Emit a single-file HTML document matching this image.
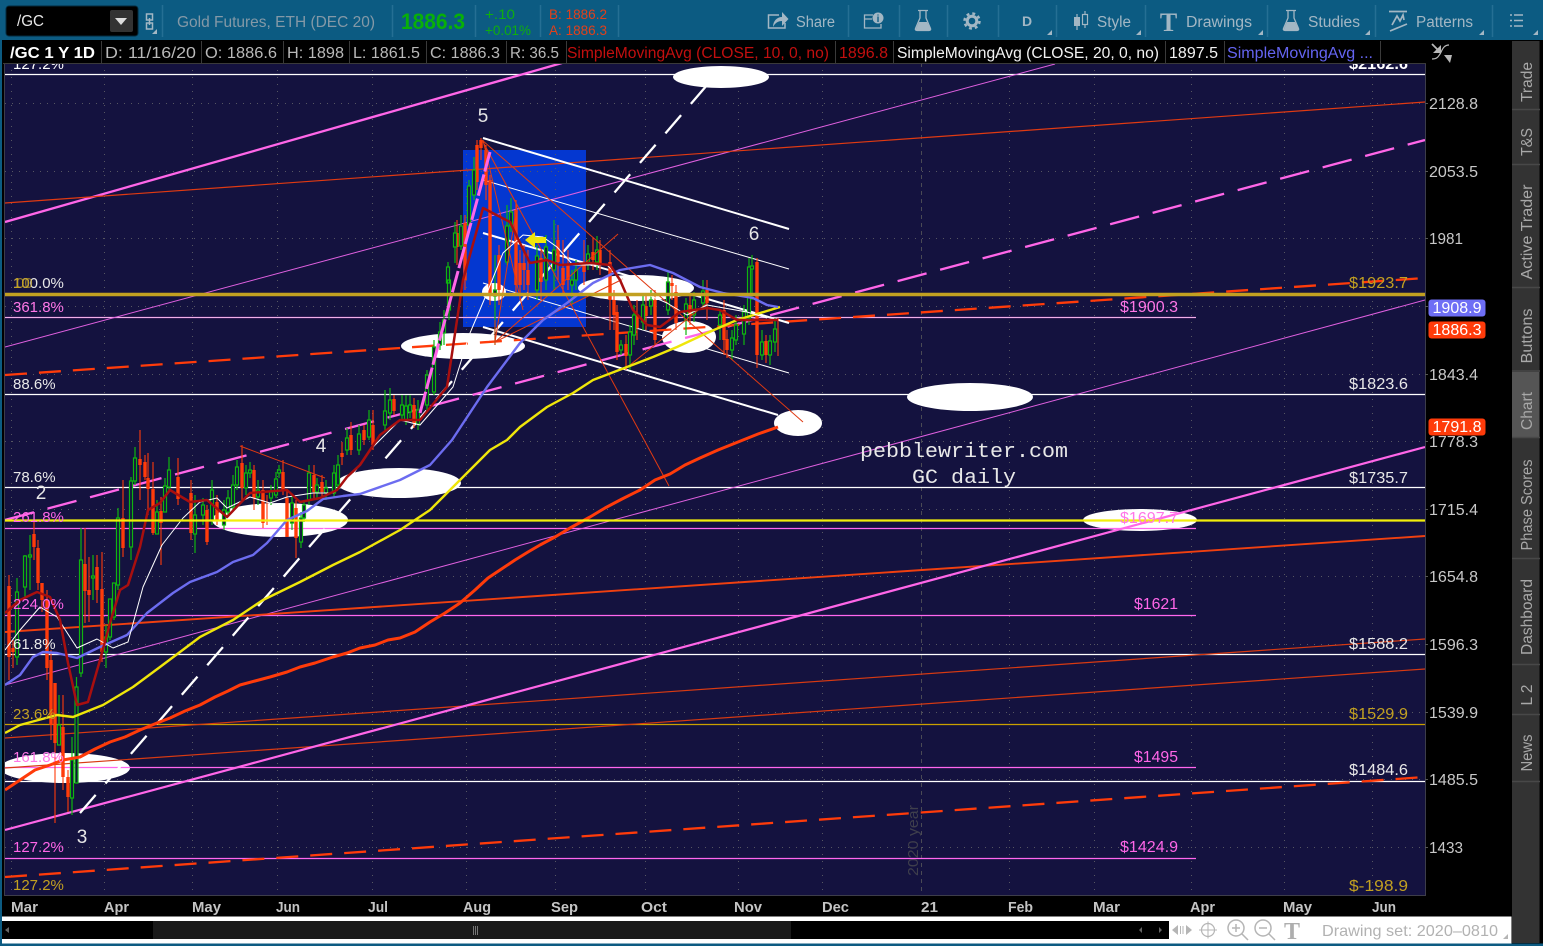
<!DOCTYPE html>
<html>
<head>
<meta charset="utf-8">
<title>/GC chart</title>
<style>
html,body{margin:0;padding:0;background:#000;width:1543px;height:946px;overflow:hidden}
svg{display:block}
text{font-family:"Liberation Sans",sans-serif}
.ax{font-size:16px;fill:#c8c8c8}
.lb{font-size:15px}
.rl{font-size:16px}
.tb{font-size:15.5px;fill:#a3b7c4}
.hd{font-size:15.5px;fill:#b9b9b9}
.tab{font-size:15.5px;fill:#a8a8a8;text-anchor:middle}
.dt{font-size:15px;fill:#c4c4c4;font-weight:bold}
</style>
</head>
<body>
<svg xmlns="http://www.w3.org/2000/svg" width="1543" height="946" viewBox="0 0 1543 946">
<defs><clipPath id="c"><rect x="5" y="63" width="1420" height="832"/></clipPath></defs>
<rect width="1543" height="946" fill="#000"/>
<rect width="1543" height="40" fill="#0c5b82"/>
<rect x="0" y="0" width="2" height="946" fill="#0c5b82"/>
<rect y="943.5" width="1543" height="2.5" fill="#0c5b82"/>

<!-- toolbar -->
<path d="M162.500 5V37M392.500 5V37M475.500 5V37M540.500 5V37M618.500 5V37M848.500 5V37M899.500 5V37M947.500 5V37M998.500 5V37M1056.500 5V37M1145.500 5V37M1267.500 5V37M1375.500 5V37M1492.500 5V37" stroke="#256f94" stroke-width="1.500" fill="none"/>
<rect x="6" y="6" width="132" height="30" rx="3" fill="#000" stroke="#052a3d"/>
<text x="17" y="26" font-size="16" fill="#e8e8e8" textLength="27" lengthAdjust="spacingAndGlyphs">/GC</text>
<rect x="110" y="10" width="23" height="22" rx="2" fill="#333"/>
<path d="M115 18h12l-6 7z" fill="#ddd"/>
<path d="M146.500 14h6v6h-6zM146.500 23h6v6h-6zM149.500 18v7" stroke="#a3b7c4" stroke-width="1.500" fill="none"/>
<path d="M157 34h-5l5-5z" fill="#a3b7c4"/>
<text x="177" y="27" font-size="16" fill="#8499a7" textLength="198" lengthAdjust="spacingAndGlyphs">Gold Futures, ETH (DEC 20)</text>
<text x="401" y="29" font-size="22" font-weight="bold" fill="#08b008" textLength="64" lengthAdjust="spacingAndGlyphs">1886.3</text>
<text x="485" y="19" font-size="13.500" fill="#0fae0f" textLength="30" lengthAdjust="spacingAndGlyphs">+.10</text>
<text x="485" y="35" font-size="13.500" fill="#0fae0f" textLength="46" lengthAdjust="spacingAndGlyphs">+0.01%</text>
<text x="549" y="19" font-size="13.500" fill="#e2401a" textLength="58" lengthAdjust="spacingAndGlyphs">B: 1886.2</text>
<text x="549" y="35" font-size="13.500" fill="#e2401a" textLength="58" lengthAdjust="spacingAndGlyphs">A: 1886.3</text>

<!-- toolbar icons -->
<path d="M779 15H768.500V28H785V23" stroke="#a3b7c4" stroke-width="1.500" fill="none"/>
<path d="M773 27c0-6 4-10 9-10V12l6.500 7-6.500 7v-5c-4 0-7 2-9 6z" fill="#a3b7c4"/>
<text x="796" y="27" class="tb" textLength="39" lengthAdjust="spacingAndGlyphs">Share</text>
<path d="M873 15H864.500V28H881V24M864.500 19H872" stroke="#a3b7c4" stroke-width="1.300" fill="none"/>
<circle cx="878" cy="18" r="5.500" fill="#a3b7c4"/>
<text x="878" y="22" font-size="10" font-weight="bold" fill="#0c5b82" text-anchor="middle">i</text>
<path d="M918 10.500h10M920 11V18L915.500 28.500c-.5 1.300.3 2 1.500 2h12c1.200 0 2-.7 1.500-2L926 18V11" stroke="#a3b7c4" stroke-width="1.300" fill="none"/>
<path d="M919 22h8l4 8h-15.500z" fill="#a3b7c4"/>
<circle cx="972" cy="21" r="4.800" fill="none" stroke="#a3b7c4" stroke-width="3"/>
<circle cx="972" cy="21" r="7.500" fill="none" stroke="#a3b7c4" stroke-width="2.500" stroke-dasharray="2.900 3"/>
<text x="1027" y="26" font-size="14" font-weight="bold" fill="#a3b7c4" text-anchor="middle">D</text>
<path d="M1077 14v16M1085 11v17" stroke="#a3b7c4" stroke-width="1.200"/>
<rect x="1074" y="17" width="6" height="9" fill="#a3b7c4"/>
<rect x="1082.500" y="14.500" width="5" height="10" fill="#0c5b82" stroke="#a3b7c4" stroke-width="1.200"/>
<text x="1097" y="27" class="tb" textLength="34" lengthAdjust="spacingAndGlyphs">Style</text>
<text x="1168.500" y="31" font-size="26" font-weight="bold" fill="#a3b7c4" text-anchor="middle" style="font-family:'Liberation Serif',serif">T</text>
<text x="1186" y="27" class="tb" textLength="66" lengthAdjust="spacingAndGlyphs">Drawings</text>
<path d="M1286 10.500h10M1288 11V18L1283.500 28.500c-.5 1.300.3 2 1.500 2h12c1.200 0 2-.7 1.500-2L1294 18V11" stroke="#a3b7c4" stroke-width="1.300" fill="none"/>
<path d="M1287 22h8l4 8h-15.500z" fill="#a3b7c4"/>
<text x="1308" y="27" class="tb" textLength="52" lengthAdjust="spacingAndGlyphs">Studies</text>
<path d="M1389 11.500h18M1392 25l5-9 3 5 3-6 1 5M1390 31l17-7" stroke="#a3b7c4" stroke-width="1.700" fill="none"/>
<text x="1416" y="27" class="tb" textLength="57" lengthAdjust="spacingAndGlyphs">Patterns</text>
<path d="M1510 15h2M1514 15h9M1510 20.500h2M1514 20.500h9M1510 26h2M1514 26h9" stroke="#a3b7c4" stroke-width="1.500"/>
<path d="M1052 30v5h-5zM1141 30v5h-5zM1263 30v5h-5zM1370 30v5h-5zM1484 30v5h-5zM1538 30v5h-5z" fill="#a3b7c4"/>

<!-- chart background -->
<rect x="4.500" y="63" width="1421" height="832.500" fill="#14123f" stroke="#3d3d4a"/>
<g clip-path="url(#c)">
<rect x="463" y="150" width="123" height="177" fill="#0437d0"/>
<path d="M5 103.500H1425M5 171.500H1425M5 238.500H1425M5 306.500H1425M5 374.500H1425M5 441.500H1425M5 509.500H1425M5 576.500H1425M5 644.500H1425M5 712.500H1425M5 779.500H1425M5 847.500H1425M11.500 63V895M104.500 63V895M192.500 63V895M277.500 63V895M372.500 63V895M466.500 63V895M555.500 63V895M645.500 63V895M738.500 63V895M822.500 63V895M1009.500 63V895M1094.500 63V895M1191.500 63V895M1284.500 63V895M1372.500 63V895" stroke="#565662" stroke-width="1" stroke-dasharray="1 6" fill="none"/>
<path d="M921.500 63V895" stroke="#4a4a55" stroke-dasharray="4 4"/>
<text transform="translate(918,876) rotate(-90)" font-size="15" fill="#3f3f4c" textLength="71" lengthAdjust="spacingAndGlyphs">2020 year</text>

<!-- ellipses -->
<g fill="#fff">
<ellipse cx="721" cy="77" rx="48" ry="11"/>
<ellipse cx="463" cy="346" rx="62" ry="13"/>
<ellipse cx="636" cy="288" rx="58" ry="13"/>
<ellipse cx="689" cy="337" rx="27" ry="16"/>
<ellipse cx="494" cy="292" rx="12" ry="9"/>
<ellipse cx="798" cy="423" rx="24" ry="13"/>
<ellipse cx="970" cy="397" rx="63" ry="14"/>
<ellipse cx="1140" cy="520" rx="57" ry="11"/>
<ellipse cx="399" cy="483" rx="62" ry="15"/>
<ellipse cx="280" cy="520" rx="68" ry="17"/>
<ellipse cx="65" cy="768" rx="65" ry="15"/>
</g>

<!-- horizontal levels -->
<path d="M5 74.500H1425M5 394.500H1425M5 487.500H1425M5 654.500H1425M5 781.500H1425" stroke="#fff" stroke-width="1.200"/>
<path d="M5 317.500H1196M5 528.500H1196M5 615.500H1196M5 767.500H1196M5 858.500H1196" stroke="#ff66ee" stroke-width="1.200"/>
<path d="M5 317.500H1196" stroke="#f0b0e8" stroke-width="1"/>
<path d="M5 724.500H1425" stroke="#c9a000" stroke-width="1.200"/>

<!-- angled lines -->
<path d="M5 222L562 63" stroke="#ff66e8" stroke-width="2.300" fill="none"/>
<path d="M5 347L1055 64M5 685L1425 300" stroke="#e060e0" stroke-width="1" fill="none"/>
<path d="M5 203L1425 102" stroke="#e03a12" stroke-width="1.200" fill="none"/>
<path d="M5 632L1425 536" stroke="#f04010" stroke-width="1.900" fill="none"/>
<path d="M5 738L1425 639M5 768L1425 669" stroke="#d83a12" stroke-width="1.200" fill="none"/>
<path d="M5 830L1425 447" stroke="#ff66e8" stroke-width="2.200" fill="none"/>
<path d="M5 520L1425 140" stroke="#ff66e8" stroke-width="2.300" stroke-dasharray="30 14" fill="none"/>
<path d="M5 375L1425 278" stroke="#ff3b0a" stroke-width="2.300" stroke-dasharray="22 12" fill="none"/>
<path d="M5 877L1425 777" stroke="#ff3b0a" stroke-width="2.300" stroke-dasharray="22 12" fill="none"/>
<path d="M80 813L720 70" stroke="#fff" stroke-width="2.300" stroke-dasharray="24 15" fill="none"/>
<path d="M483 138L789 229M483 233L789 323M483 327L778 415" stroke="#fff" stroke-width="2" fill="none"/>
<path d="M483 180L789 269M483 283L789 373" stroke="#fff" stroke-width="1" fill="none"/>

<!-- candles: wicks -->
<path fill="none" stroke="#ff3b0a" stroke-width="1.100" d="M9 575V680M13 640V668M34 520V560M38 540V590M42 583V612M47 590V680M51 650V740M55 683V823M63 695V790M68 770V812M85 528V623M89 557V622M97 555V603M102 552V662M123 480V557M140 430V500M145 455V480M148 453V515M153 462V535M161 497V565M178 458V505M191 480V540M207 505V545M217 495V525M242 445V500M254 465V510M263 480V528M267 495V525M283 460V495M287 490V537M296 500V558M314 465V500M322 475V500M342 442V465M351 422V455M364 425V445M373 410V450M394 395V415M414 398V428M457 220V265M465 215V290M477 140V190M481 138V160M486 145V200M490 175V305M499 245V305M516 200V295M520 250V300M524 245V290M528 250V300M541 250V300M558 225V280M563 240V295M568 250V290M584 240V285M593 237V270M600 240V275M610 250V330M614 290V330M617 305V360M626 335V370M637 300V340M646 295V330M655 290V345M672 275V300M676 285V330M690 295V325M707 280V320M724 300V355M727 330V358M757 258V368M766 335V363M778 318V356"/>
<path fill="none" stroke="#0fb50f" stroke-width="1.200" d="M17 578V665M25 555V600M30 535V590M59 695V745M72 737V815M76.500 677V783M81 528V677M93 555V600M106 625V668M110 600V640M114 585V620M118 508V590M131 477V560M135 447V485M157 500V534M165 478V512M169 457V490M195 495V553M203 498V525M212 480V525M224 500V530M228 490V515M233 475V510M237 460V490M246 465V495M250 462V478M258 480V505M271 485V505M276 472V498M279 465V478M292 495V530M301 512V548M304 500V522M309 465V505M317 478V500M326 480V500M334 465V497M338 455V490M347 428V455M359 425V455M369 410V440M385 390V430M390 388V420M402 395V420M406 395V425M410 395V418M418 400V430M427 370V410M434 340V395M440 322V350M444 310V345M449 275V320M448 262V290M455 222V263M461 215V250M469 180V230M474 157V200M495 255V345M507 205V265M511 198V232M537 245V300M546 235V290M554 220V290M572 270V305M576 260V290M588 245V270M597 236V270M621 340V355M630 325V370M634 305V345M643 295V330M651 290V315M668 272V315M686 298V335M694 292V322M703 280V310M720 310V340M732 330V360M736 315V345M744 305V345M749 258V325M752 255V300M762 330V360M770 335V365M775 318V352"/>
<!-- candles: red bodies -->
<path fill="none" stroke="#ff3b0a" stroke-width="3.400" d="M9 586V657M13 648V652M34 534V547M38 548V583M42 583V600M47 600V668M51 660V725M55 683V743M63 727V777M68 777V797M85 564V591M89 590V595M97 567V590M102 589V652M123 518V548M140 459V465M145 462V477M148 478V489M153 489V533M161 511V523M178 477V499M191 493V533M207 510V542M217 502V520M242 463V488M254 470V498M263 490V523M283 472V490M287 498V537M296 508V538M314 475V492M322 482V492M342 453V457M351 435V450M364 430V440M373 425V445M394 399V411M414 405V423M457 233V247M465 223V280M477 145V182M481 140V148M486 150V185M490 180V295M499 255V290M516 210V285M520 263V285M524 263V270M528 270V285M541 258V282M558 240V262M563 268V285M568 265V280M584 263V272M593 252V260M600 250V265M610 262V300M614 300V315M617 312V352M626 344V356M637 315V328M646 306V316M655 300V340M672 283V286M676 292V323M690 305V315M707 290V303M724 310V340M727 339V350M757 262V355M766 341V355"/>
<!-- candles: green bodies -->
<path fill="#14123f" stroke="#0fb50f" stroke-width="1.200" d="M15.500 592h3v65h-3zM23.500 556h3v31h-3zM28.500 555h3v2h-3zM57.500 725h3v20h-3zM70.500 760h3v38h-3zM75 687h3v96h-3zM79.500 560h3v113h-3zM91.500 576h3v2h-3zM104.500 637h3v15h-3zM108.500 599h3v38h-3zM112.500 583h3v34h-3zM116.500 518h3v67h-3zM129.500 481h3v66h-3zM133.500 458h3v23h-3zM155.500 512h3v22h-3zM163.500 486h3v26h-3zM167.500 470h3v17h-3zM193.500 515h3v19h-3zM201.500 505h3v10h-3zM210.500 490h3v30h-3zM222.500 510h3v15h-3zM226.500 498h3v14h-3zM231.500 485h3v22h-3zM235.500 467h3v18h-3zM244.500 473h3v15h-3zM248.500 470h3v3h-3zM256.500 490h3v7h-3zM269.500 492h3v6h-3zM274.500 479h3v16h-3zM277.500 470h3v3h-3zM290.500 503h3v20h-3zM299.500 518h3v24h-3zM302.500 505h3v13h-3zM307.500 473h3v27h-3zM315.500 485h3v7h-3zM324.500 488h3v5h-3zM332.500 473h3v20h-3zM336.500 465h3v20h-3zM345.500 438h3v12h-3zM357.500 434h3v16h-3zM367.500 420h3v17h-3zM383.500 411h3v14h-3zM388.500 400h3v13h-3zM400.500 405h3v10h-3zM404.500 406h3v14h-3zM408.500 405h3v7h-3zM416.500 410h3v14h-3zM425.500 375h3v30h-3zM432.500 347h3v45h-3zM438.500 332h3v13h-3zM442.500 320h3v13h-3zM447.500 280h3v30h-3zM446.500 267h3v16h-3zM453.500 233h3v14h-3zM459.500 226h3v20h-3zM467.500 186h3v39h-3zM472.500 170h3v25h-3zM493.500 290h3v6h-3zM505.500 226h3v36h-3zM509.500 212h3v14h-3zM535.500 256h3v34h-3zM544.500 247h3v33h-3zM552.500 250h3v20h-3zM570.500 280h3v5h-3zM574.500 270h3v10h-3zM586.500 254h3v8h-3zM595.500 250h3v12h-3zM619.500 345h3v5h-3zM628.500 332h3v23h-3zM632.500 315h3v20h-3zM641.500 305h3v17h-3zM649.500 300h3v6h-3zM666.500 282h3v28h-3zM684.500 304h3v16h-3zM692.500 300h3v15h-3zM701.500 291h3v12h-3zM718.500 315h3v10h-3zM730.500 338h3v12h-3zM734.500 325h3v15h-3zM742.500 312h3v22h-3zM747.500 267h3v51h-3zM750.500 266h3v3h-3zM760.500 342h3v13h-3zM768.500 341h3v14h-3zM773.500 329h3v13h-3z"/>

<!-- thin red fan -->
<path d="M482 140L669 486M482 140L803 422M495 342L618 234M495 342L623 279M495 342L517 205M483 140L523 310M630 365L707 303M240 446L325 478M495 345L495 320M482 140L517 205" stroke="#e03a12" stroke-width="1" fill="none"/>

<!-- moving averages -->
<polyline fill="none" stroke="#ff3b0a" stroke-width="3" stroke-linejoin="round" points="5,790 20,780 35,770 50,765 63,760 80,757 95,749 110,742 125,737 140,730 157,723 170,718 185,711 200,705 215,697 228,691 240,685 255,681 270,677 287,672 300,667 315,663 333,657 347,653 360,648 375,645 388,640 400,638 415,632 430,622 445,613 460,603 475,590 488,578 500,570 515,560 528,552 540,545 555,537 570,528 590,517 605,508 622,499 640,490 655,480 670,474 685,465 700,458 718,450 738,442 758,434 778,427"/>
<polyline fill="none" stroke="#efe60a" stroke-width="2.400" stroke-linejoin="round" points="5,733 20,725 57,715 73,717 103,705 133,687 160,667 200,637 233,620 263,600 300,582 333,565 360,552 400,530 430,510 460,480 490,450 507,440 520,427 547,407 573,393 593,380 627,367 653,357 677,347 707,333 737,320 780,307"/>
<polyline fill="none" stroke="#6c6cf0" stroke-width="2.400" stroke-linejoin="round" points="5,685 20,675 33,657 43,652 57,653 77,658 100,647 127,635 147,613 173,593 190,582 217,572 233,562 253,555 267,543 287,520 307,511 323,499 343,496 360,494 400,480 430,465 452,440 487,387 520,343 543,320 567,303 593,283 620,270 650,265 673,273 700,287 723,293 753,298 767,305 778,307"/>
<polyline fill="none" stroke="#fff" stroke-width="1" stroke-linejoin="round" points="5,650 20,630 40,607 57,617 77,648 97,639 113,648 128,642 143,587 162,545 183,518 200,502 217,498 227,508 250,497 270,503 287,497 313,493 333,493 347,483 370,450 400,420 420,425 453,387 470,333 487,293 503,253 523,235 543,237 557,247 573,265 607,265 630,287 667,303 687,315 707,305 747,312 767,318"/>
<polyline fill="none" stroke="#a80f0f" stroke-width="2.500" stroke-linejoin="round" points="5,613 20,600 37,592 50,597 60,620 68,663 77,705 88,702 100,660 110,623 120,590 128,585 140,547 148,510 160,503 170,490 190,502 207,500 227,517 250,493 287,490 300,502 320,498 337,490 347,477 360,465 380,435 400,420 420,420 447,387 463,280 483,208 510,222 520,243 530,263 547,260 560,265 590,263 610,265 620,280 633,310 647,325 660,327 680,312 707,308 720,310 737,320 778,320"/>
<path d="M420 413L490 152" stroke="#ff66e8" stroke-width="3" fill="none" stroke-dasharray="22 3"/>
<path d="M5 294.500H1425" stroke="#c2a021" stroke-width="3.500"/>
<path d="M5 520.500H1425" stroke="#f2ee0a" stroke-width="2.200"/>
<path d="M546 237v6h-11v5l-10-8 10-8v5z" fill="#efe60a"/>

<!-- wave labels -->
<text x="483" y="122" font-size="19" fill="#e6e6e6" text-anchor="middle">5</text>
<text x="754" y="240" font-size="19" fill="#e6e6e6" text-anchor="middle">6</text>
<text x="321" y="452" font-size="19" fill="#e6e6e6" text-anchor="middle">4</text>
<text x="41" y="499" font-size="19" fill="#e6e6e6" text-anchor="middle">2</text>
<text x="82" y="843" font-size="19" fill="#e6e6e6" text-anchor="middle">3</text>
<text x="860" y="457" font-size="20" fill="#e8e8e8" textLength="208" lengthAdjust="spacingAndGlyphs" style="font-family:'Liberation Mono',monospace">pebblewriter.com</text>
<text x="912" y="483" font-size="20" fill="#e8e8e8" textLength="104" lengthAdjust="spacingAndGlyphs" style="font-family:'Liberation Mono',monospace">GC daily</text>

<!-- left labels -->
<text x="13" y="69" class="lb" fill="#fff">127.2%</text>
<text x="13" y="288" class="lb" fill="#e8e8e8">100.0%</text>
<text x="13" y="288" class="lb" fill="#c2a021">10</text>
<text x="16" y="288" class="lb" fill="#c2a021" opacity="0.7">00</text>
<text x="13" y="312" class="lb" fill="#ff77e8">361.8%</text>
<text x="13" y="389" class="lb" fill="#e8e8e8">88.6%</text>
<text x="13" y="482" class="lb" fill="#e8e8e8">78.6%</text>
<text x="13" y="522" class="lb" fill="#ff66e8">261.8%</text>
<text x="13" y="609" class="lb" fill="#ff66e8">224.0%</text>
<text x="13" y="649" class="lb" fill="#e8e8e8">61.8%</text>
<text x="13" y="719" class="lb" fill="#c2a021">23.6%</text>
<text x="13" y="762" class="lb" fill="#ff77e8">161.8%</text>
<text x="13" y="852" class="lb" fill="#ff66e8">127.2%</text>
<text x="13" y="890" class="lb" fill="#c2a021">127.2%</text>
<!-- right labels -->
<text x="1349" y="69" class="rl" fill="#fff" font-weight="bold" textLength="59" lengthAdjust="spacingAndGlyphs">$2162.6</text>
<text x="1349" y="288" class="rl" fill="#c2a021" textLength="59" lengthAdjust="spacingAndGlyphs">$1923.7</text>
<text x="1120" y="312" class="rl" fill="#ff77e8" textLength="58" lengthAdjust="spacingAndGlyphs">$1900.3</text>
<text x="1349" y="389" class="rl" fill="#e8e8e8" textLength="59" lengthAdjust="spacingAndGlyphs">$1823.6</text>
<text x="1349" y="483" class="rl" fill="#e8e8e8" textLength="59" lengthAdjust="spacingAndGlyphs">$1735.7</text>
<text x="1120" y="523" class="rl" fill="#ff77e8" textLength="58" lengthAdjust="spacingAndGlyphs">$1697.7</text>
<text x="1134" y="609" class="rl" fill="#ff66e8" textLength="44" lengthAdjust="spacingAndGlyphs">$1621</text>
<text x="1349" y="649" class="rl" fill="#e8e8e8" textLength="59" lengthAdjust="spacingAndGlyphs">$1588.2</text>
<text x="1349" y="719" class="rl" fill="#c2a021" textLength="59" lengthAdjust="spacingAndGlyphs">$1529.9</text>
<text x="1134" y="762" class="rl" fill="#ff66e8" textLength="44" lengthAdjust="spacingAndGlyphs">$1495</text>
<text x="1349" y="775" class="rl" fill="#e8e8e8" textLength="59" lengthAdjust="spacingAndGlyphs">$1484.6</text>
<text x="1120" y="852" class="rl" fill="#ff66e8" textLength="58" lengthAdjust="spacingAndGlyphs">$1424.9</text>
<text x="1349" y="891" class="rl" fill="#c2a021" textLength="59" lengthAdjust="spacingAndGlyphs">$-198.9</text>
</g>

<!-- header row -->
<rect x="3" y="40.500" width="1423" height="22.500" fill="#000"/>
<path d="M101.500 41V63M201.500 41V63M283.500 41V63M349.500 41V63M426.500 41V63M506.500 41V63M566.500 41V63M835.500 41V63M893.500 41V63M1165.500 41V63M1224.500 41V63M1380.500 41V63M3 63.500H1426" stroke="#3a3a3a" fill="none"/>
<text x="10" y="58" font-size="16" font-weight="bold" fill="#fff" textLength="85" lengthAdjust="spacingAndGlyphs">/GC 1 Y 1D</text>
<text x="105" y="58" class="hd" textLength="91" lengthAdjust="spacingAndGlyphs">D: 11/16/20</text>
<text x="205" y="58" class="hd" textLength="72" lengthAdjust="spacingAndGlyphs">O: 1886.6</text>
<text x="287" y="58" class="hd" textLength="57" lengthAdjust="spacingAndGlyphs">H: 1898</text>
<text x="353" y="58" class="hd" textLength="67" lengthAdjust="spacingAndGlyphs">L: 1861.5</text>
<text x="430" y="58" class="hd" textLength="70" lengthAdjust="spacingAndGlyphs">C: 1886.3</text>
<text x="510" y="58" class="hd" textLength="49" lengthAdjust="spacingAndGlyphs">R: 36.5</text>
<text x="567" y="58" class="hd" style="fill:#c20f0f" textLength="262" lengthAdjust="spacingAndGlyphs">SimpleMovingAvg (CLOSE, 10, 0, no)</text>
<text x="839" y="58" class="hd" style="fill:#c20f0f" textLength="49" lengthAdjust="spacingAndGlyphs">1896.8</text>
<text x="897" y="58" class="hd" style="fill:#f2f2f2" textLength="262" lengthAdjust="spacingAndGlyphs">SimpleMovingAvg (CLOSE, 20, 0, no)</text>
<text x="1169" y="58" class="hd" style="fill:#f2f2f2" textLength="49" lengthAdjust="spacingAndGlyphs">1897.5</text>
<text x="1227" y="58" class="hd" style="fill:#6464f0" textLength="146" lengthAdjust="spacingAndGlyphs">SimpleMovingAvg ...</text>

<!-- collapse icon -->
<path d="M1432 44l6 6" stroke="#b8b8b8" stroke-width="1.800" fill="none"/>
<path d="M1441 45v8h-8zM1444 55h8l-2 8z" fill="#b8b8b8"/>
<path d="M1432 59c5 0 6-2 8-5s3-9 9-9" stroke="#b8b8b8" stroke-width="1.200" fill="none"/>

<!-- price axis -->
<text x="1429" y="109" class="ax" textLength="49" lengthAdjust="spacingAndGlyphs">2128.8</text>
<text x="1429" y="177" class="ax" textLength="49" lengthAdjust="spacingAndGlyphs">2053.5</text>
<text x="1429" y="244" class="ax" textLength="34" lengthAdjust="spacingAndGlyphs">1981</text>
<text x="1429" y="380" class="ax" textLength="49" lengthAdjust="spacingAndGlyphs">1843.4</text>
<text x="1429" y="447" class="ax" textLength="49" lengthAdjust="spacingAndGlyphs">1778.3</text>
<text x="1429" y="515" class="ax" textLength="49" lengthAdjust="spacingAndGlyphs">1715.4</text>
<text x="1429" y="582" class="ax" textLength="49" lengthAdjust="spacingAndGlyphs">1654.8</text>
<text x="1429" y="650" class="ax" textLength="49" lengthAdjust="spacingAndGlyphs">1596.3</text>
<text x="1429" y="718" class="ax" textLength="49" lengthAdjust="spacingAndGlyphs">1539.9</text>
<text x="1429" y="785" class="ax" textLength="49" lengthAdjust="spacingAndGlyphs">1485.5</text>
<text x="1429" y="853" class="ax" textLength="34" lengthAdjust="spacingAndGlyphs">1433</text>
<path d="M1425 103.500h3M1425 171.500h3M1425 238.500h3M1425 306.500h3M1425 374.500h3M1425 441.500h3M1425 509.500h3M1425 576.500h3M1425 644.500h3M1425 712.500h3M1425 779.500h3M1425 847.500h3" stroke="#555"/>
<rect x="1428.500" y="299.500" width="57" height="17" rx="3" fill="#6e6ef5"/>
<text x="1457" y="313" font-size="15.500" fill="#fff" text-anchor="middle" textLength="49" lengthAdjust="spacingAndGlyphs">1908.9</text>
<rect x="1428.500" y="321.500" width="57" height="17" rx="3" fill="#ff3b0a"/>
<text x="1457" y="335" font-size="15.500" fill="#fff" text-anchor="middle" textLength="49" lengthAdjust="spacingAndGlyphs">1886.3</text>
<rect x="1428.500" y="418.500" width="57" height="17" rx="3" fill="#ff3b0a"/>
<text x="1457" y="432" font-size="15.500" fill="#fff" text-anchor="middle" textLength="49" lengthAdjust="spacingAndGlyphs">1791.8</text>

<!-- date axis -->
<text x="11" y="912" class="dt" textLength="27" lengthAdjust="spacingAndGlyphs">Mar</text>
<text x="104" y="912" class="dt" textLength="25" lengthAdjust="spacingAndGlyphs">Apr</text>
<text x="192" y="912" class="dt" textLength="29" lengthAdjust="spacingAndGlyphs">May</text>
<text x="276" y="912" class="dt" textLength="24" lengthAdjust="spacingAndGlyphs">Jun</text>
<text x="368" y="912" class="dt" textLength="20" lengthAdjust="spacingAndGlyphs">Jul</text>
<text x="463" y="912" class="dt" textLength="28" lengthAdjust="spacingAndGlyphs">Aug</text>
<text x="551" y="912" class="dt" textLength="27" lengthAdjust="spacingAndGlyphs">Sep</text>
<text x="641" y="912" class="dt" textLength="26" lengthAdjust="spacingAndGlyphs">Oct</text>
<text x="734" y="912" class="dt" textLength="28" lengthAdjust="spacingAndGlyphs">Nov</text>
<text x="822" y="912" class="dt" textLength="27" lengthAdjust="spacingAndGlyphs">Dec</text>
<text x="921" y="912" class="dt" textLength="17" lengthAdjust="spacingAndGlyphs">21</text>
<text x="1008" y="912" class="dt" textLength="25" lengthAdjust="spacingAndGlyphs">Feb</text>
<text x="1093" y="912" class="dt" textLength="27" lengthAdjust="spacingAndGlyphs">Mar</text>
<text x="1190" y="912" class="dt" textLength="25" lengthAdjust="spacingAndGlyphs">Apr</text>
<text x="1283" y="912" class="dt" textLength="29" lengthAdjust="spacingAndGlyphs">May</text>
<text x="1372" y="912" class="dt" textLength="24" lengthAdjust="spacingAndGlyphs">Jun</text>

<!-- bottom bar -->
<rect x="2" y="916.500" width="1509.500" height="27" fill="#fff"/>
<rect x="2" y="921" width="1167" height="18" fill="#000"/>
<rect x="153" y="921" width="638" height="18" fill="#1a1a1a"/>
<path d="M473.500 926v9M475.500 926v9M477.500 926v9" stroke="#777"/>
<path d="M9 927v6l-4-3zM1142 927v6l-3-3zM1159 927v6l3-3z" fill="#666"/>
<path d="M1178 925v10l-6-5zM1186 925v10l6-5z" fill="#b5b5b5"/>
<path d="M1180.500 926v8M1183 926v8" stroke="#b5b5b5"/>
<circle cx="1208" cy="930" r="6.500" fill="none" stroke="#b5b5b5" stroke-width="1.200"/>
<path d="M1199 930h18M1208 921.500v17" stroke="#b5b5b5" stroke-width="1"/>
<circle cx="1236" cy="928" r="8" fill="none" stroke="#b5b5b5" stroke-width="1.500"/>
<path d="M1232 928h8M1236 924v8M1242 934l6 6" stroke="#b5b5b5" stroke-width="1.500"/>
<circle cx="1263" cy="928" r="8" fill="none" stroke="#b5b5b5" stroke-width="1.500"/>
<path d="M1259 928h8M1269 934l6 6" stroke="#b5b5b5" stroke-width="1.500"/>
<text x="1292" y="939" font-size="24" font-weight="bold" fill="#aeaeae" text-anchor="middle" style="font-family:'Liberation Serif',serif">T</text>
<text x="1322" y="936" font-size="16" fill="#b2b2b2" textLength="176" lengthAdjust="spacingAndGlyphs">Drawing set: 2020–0810</text>
<path d="M1508 934v5h-5z" fill="#b5b5b5"/>

<!-- sidebar -->
<rect x="1512" y="41" width="27.500" height="902" fill="#333"/>
<rect x="1512" y="372" width="27.500" height="65" fill="#555"/>
<path d="M1512 109.500h28M1512 164.500h28M1512 287.500h28M1512 371h28M1512 437.500h28M1512 558.500h28M1512 664.500h28M1512 714.500h28M1512 781.500h28" stroke="#484848" stroke-width="1.500"/>
<text transform="translate(1532,82) rotate(-90)" class="tab" textLength="40" lengthAdjust="spacingAndGlyphs">Trade</text>
<text transform="translate(1532,142) rotate(-90)" class="tab" textLength="28" lengthAdjust="spacingAndGlyphs">T&amp;S</text>
<text transform="translate(1532,232) rotate(-90)" class="tab" textLength="95" lengthAdjust="spacingAndGlyphs">Active Trader</text>
<text transform="translate(1532,336) rotate(-90)" class="tab" textLength="55" lengthAdjust="spacingAndGlyphs">Buttons</text>
<text transform="translate(1532,411) rotate(-90)" class="tab" textLength="38" lengthAdjust="spacingAndGlyphs">Chart</text>
<text transform="translate(1532,505) rotate(-90)" class="tab" textLength="91" lengthAdjust="spacingAndGlyphs">Phase Scores</text>
<text transform="translate(1532,617) rotate(-90)" class="tab" textLength="76" lengthAdjust="spacingAndGlyphs">Dashboard</text>
<text transform="translate(1532,695) rotate(-90)" class="tab" textLength="21" lengthAdjust="spacingAndGlyphs">L 2</text>
<text transform="translate(1532,753) rotate(-90)" class="tab" textLength="37" lengthAdjust="spacingAndGlyphs">News</text>
</svg>
</body>
</html>
